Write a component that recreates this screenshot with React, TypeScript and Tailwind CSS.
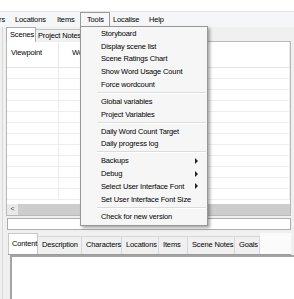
import React from "react";

// Windows-style menu item row
function MenuRow({ label, sub }: { label: string; sub?: boolean }) {
  return (
    <div className="h-[12.75px] flex items-center pl-[20px] pr-[9px] justify-between">
      <span>{label}</span>
      {sub && (
        <span className="w-0 h-0 border-l-[3px] border-l-[#222] border-y-[3px] border-y-transparent" />
      )}
    </div>
  );
}

function MenuSep() {
  return (
    <div className="h-[4.25px] flex flex-col justify-center pl-[16px] pr-[1px]">
      <div className="h-px bg-[#dcdcdc]" />
      <div className="h-px bg-white" />
    </div>
  );
}

export default function App() {
  const rows = Array.from({ length: 12 });
  const bottomTabs = [
    { label: "Content", w: "w-[30px]", active: true },
    { label: "Description", w: "w-[44px]" },
    { label: "Characters", w: "w-[40px]" },
    { label: "Locations", w: "w-[37px]" },
    { label: "Items", w: "w-[29px]" },
    { label: "Scene Notes", w: "w-[47px]" },
    { label: "Goals", w: "w-[25px]" },
  ];

  return (
    <div
      className="relative w-[294px] h-[299px] overflow-hidden bg-[#f0f0f0] text-[7.5px] text-[#000] tracking-[-0.15px]"
      style={{ fontFamily: '"Liberation Sans", Arial, sans-serif' }}
    >
      {/* title strip */}
      <div className="h-[12px] bg-white border-b border-[#e3e3e3]" />

      {/* menu bar */}
      <div className="h-[15px] bg-[#f5f6f7] flex items-center whitespace-nowrap">
        <div className="ml-[-35px] w-[44px] pr-[4px] text-right">Characters</div>
        <div className="w-[42px] pl-[6px]">Locations</div>
        <div className="w-[29px] pl-[6px]">Items</div>
        <div className="w-[30px] h-[15px] pl-[6px] flex items-center bg-[#f7f7f7] border border-b-0 border-[#9a9a9a]">Tools</div>
        <div className="w-[36px] pl-[3px]">Localise</div>
        <div className="w-[30px] pl-[3px]">Help</div>
      </div>

      {/* body */}
      <div className="ml-[2px] border-l border-[#dadada] pl-[3px] pr-[3px]">
        {/* top tabs */}
        <div className="h-[15px] flex items-end whitespace-nowrap">
          <div className="h-[15px] w-[30px] pl-[3px] flex items-center bg-white border border-b-0 border-[#adadad] relative z-10">Scenes</div>
          <div className="h-[13px] w-[48px] pl-[2px] flex items-center bg-[#f0f0f0] border border-l-0 border-b-0 border-[#c4c4c4]">Project Notes</div>
        </div>

        {/* scenes grid panel */}
        <div className="border border-[#b8b8b8] bg-white mt-[-1px] h-[175px] flex flex-col">
          <div className="h-[26px] flex border-b border-[#e5e5e5] shrink-0">
            <div className="w-[52px] pl-[4px] pt-[5px] border-r border-[#e8e8e8]">Viewpoint</div>
            <div className="flex-1 pl-[13px] pt-[5px] border-r border-[#e8e8e8] whitespace-nowrap">Word Count</div>
          </div>
          <div className="flex-1 overflow-hidden">
            {rows.map((_, i) => (
              <div key={i} className="h-[11px] flex border-b border-[#eeeeee]">
                <div className="w-[52px] border-r border-[#ececec]" />
                <div className="flex-1 border-r border-[#ececec]" />
              </div>
            ))}
          </div>
          {/* horizontal scrollbar */}
          <div className="h-[11px] flex bg-[#e9e9e9] shrink-0">
            <div className="w-[11px] flex items-center justify-center text-[7px] text-[#444]">&lt;</div>
            <div className="flex-1 bg-[#cdcdcd]" />
          </div>
        </div>

        {/* input */}
        <div className="mt-[2px] ml-[1px] h-[12px] bg-white border border-[#abadb3]" />

        {/* bottom tabs */}
        <div className="mt-[4px] ml-[2px] h-[21px] flex items-end border-b border-[#9c9c9c]">
          {bottomTabs.map((t) => (
            <div
              key={t.label}
              className={
                t.active
                  ? `${t.w} h-[21px] pl-[3px] pt-[4px] bg-white border border-b-0 border-[#c8c8c8] whitespace-nowrap`
                  : `${t.w} h-[18px] pl-[4px] pt-[2px] bg-[#f0f0f0] border-r border-t border-[#d8d8d8] whitespace-nowrap`
              }
            >
              {t.label}
            </div>
          ))}
          <div className="flex-1 h-[21px] bg-[#fbfbfb]" />
        </div>

        {/* content panel */}
        <div className="ml-[4px] mr-[-3px] h-[60px] bg-white border-l-2 border-t-2 border-[#a3a3a3]" />
      </div>

      {/* Tools dropdown */}
      <div className="absolute left-[80px] top-[26px] w-[128px] bg-[#f6f6f6] border border-[#979797] shadow-[2px_2px_3px_rgba(0,0,0,0.35)] pb-[2px] whitespace-nowrap">
        <MenuRow label="Storyboard" />
        <MenuRow label="Display scene list" />
        <MenuRow label="Scene Ratings Chart" />
        <MenuRow label="Show Word Usage Count" />
        <MenuRow label="Force wordcount" />
        <MenuSep />
        <MenuRow label="Global variables" />
        <MenuRow label="Project Variables" />
        <MenuSep />
        <MenuRow label="Daily Word Count Target" />
        <MenuRow label="Daily progress log" />
        <MenuSep />
        <MenuRow label="Backups" sub />
        <MenuRow label="Debug" sub />
        <MenuRow label="Select User Interface Font" sub />
        <MenuRow label="Set User Interface Font Size" />
        <MenuSep />
        <MenuRow label="Check for new version" />
      </div>
    </div>
  );
}
